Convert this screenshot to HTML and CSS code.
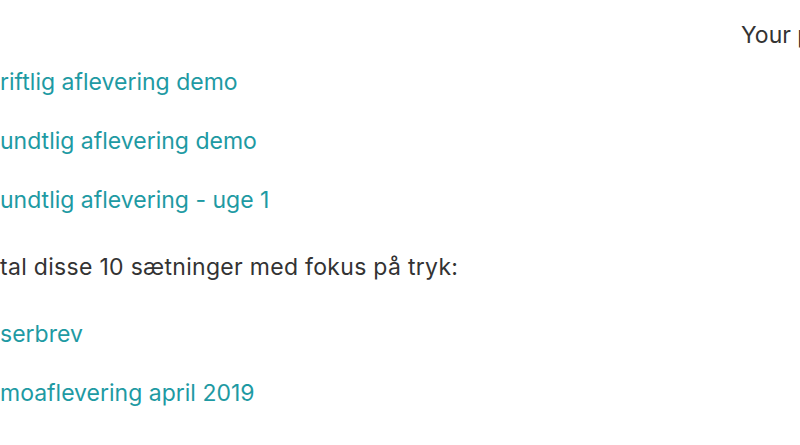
FILE: index.html
```html
<!DOCTYPE html>
<html>

<head>
	<meta charset="UTF-8">
	<title>Kursus</title>
	<link rel="stylesheet" href="styles.css">
</head>

<body>
	<div class="topbar">
		<span class="progress">Your progress</span>
	</div>
	<ul class="activities">
		<li class="activity"><a href="#">riftlig aflevering demo</a></li>
		<li class="activity"><a href="#">undtlig aflevering demo</a></li>
		<li class="activity"><a href="#">undtlig aflevering - uge 1</a></li>
		<li class="activity label">tal disse 10 sætninger med fokus på tryk:</li>
		<li class="activity"><a href="#">serbrev</a></li>
		<li class="activity"><a href="#">moaflevering april 2019</a></li>
	</ul>
</body>

</html>
```

FILE: styles.css
```css
html,
body {
	overflow: hidden;
}

body {
	margin: 0;
	background: #fff;
	font-family: Inter, "Noto Sans", sans-serif;
	font-size: 23px;
	color: #333;
}

.topbar {
	display: flex;
	justify-content: flex-end;
	padding-top: 20px;
	height: 33px;
}

.progress {
	width: 59px;
	white-space: nowrap;
	line-height: 30px;
}

.activities {
	list-style: none;
	margin: 0;
	padding: 0;
}

.activity {
	height: 59px;
	line-height: 59px;
	white-space: nowrap;
}

.activity.label {
	margin: 8px 0;
	letter-spacing: 0.3px;
}

.activity a {
	color: #1e9aa3;
	text-decoration: none;
}
```
